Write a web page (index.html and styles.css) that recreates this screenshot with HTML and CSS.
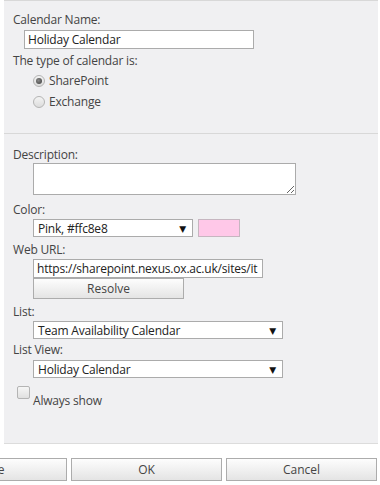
FILE: index.html
```html
<!DOCTYPE html>
<html lang="en">
<head>
    <meta charset="UTF-8">
    <title>Calendar Overlay Settings</title>
    <link rel="stylesheet" href="styles.css">
</head>
<body>

<div class="panel">
    <div class="section top">
        <div class="label">Calendar Name:</div>
        <input type="text" class="text-input name-input" value="Holiday Calendar">

        <div class="label type-label">The type of calendar is:</div>
        <div class="radio-row first-radio">
            <span class="radio checked"></span>
            <span class="radio-text">SharePoint</span>
        </div>
        <div class="radio-row">
            <span class="radio"></span>
            <span class="radio-text">Exchange</span>
        </div>
    </div>

    <div class="section bottom">
        <div class="label">Description:</div>
        <textarea class="desc"></textarea>

        <div class="label color-label">Color:</div>
        <div class="color-row">
            <div class="select color-select">
                <span>Pink, #ffc8e8</span>
                <span class="arrow">&#9660;</span>
            </div>
            <div class="swatch"></div>
        </div>

        <div class="label gap5">Web URL:</div>
        <input type="text" class="text-input url-input" value="https://sharepoint.nexus.ox.ac.uk/sites/it">
        <button class="button resolve">Resolve</button>

        <div class="label gap5">List:</div>
        <div class="select wide-select">
            <span>Team Availability Calendar</span>
            <span class="arrow">&#9660;</span>
        </div>

        <div class="label view-label">List View:</div>
        <div class="select wide-select view-select">
            <span>Holiday Calendar</span>
            <span class="arrow">&#9660;</span>
        </div>

        <div class="check-row">
            <span class="checkbox"></span>
            <span class="check-text">Always show</span>
        </div>
    </div>
</div>

<div class="footer">
    <button class="button action">Save</button>
    <button class="button action">OK</button>
    <button class="button action cancel">Cancel</button>
</div>

</body>
</html>
```

FILE: styles.css
```css
/* SharePoint style dialog */
body {
    margin: 0;
    background-color: #fff;
    font-family: "Open Sans", "DejaVu Sans", sans-serif;
    font-size: 12px;
    letter-spacing: -0.2px;
    color: #444;
}
.panel {
    margin-left: 4px;
    width: 374px;
    background-color: #f0f0f2;
    border-top: 1px solid #d8d8d8;
    border-bottom: 1px solid #dcdcdc;
}
.section {
    padding-left: 9px;
}
.top {
    padding-top: 11px;
    padding-bottom: 21px;
    border-bottom: 1px solid #d8d8d8;
}
.bottom {
    padding-top: 13px;
    padding-bottom: 34px;
}
.label {
    line-height: 16px;
    height: 16px;
}
.type-label {
    margin-top: 4px;
}
.color-label {
    margin-top: 7px;
}
.gap5 {
    margin-top: 5px;
}
.view-label {
    margin-top: 3px;
}
.text-input {
    display: block;
    box-sizing: border-box;
    height: 19px;
    margin: 2px 0 0 0;
    padding: 0 2px 0 3px;
    border: 1px solid #ababab;
    background-color: #fff;
    font-family: inherit;
    font-size: 12px;
    letter-spacing: -0.2px;
    color: #222;
    outline: none;
}
.name-input {
    width: 230px;
    margin-left: 11px;
}
.url-input {
    width: 230px;
    margin-left: 20px;
    margin-top: 1px;
}
.radio-row {
    display: flex;
    align-items: center;
    height: 21px;
    padding-left: 20px;
}
.first-radio {
    margin-top: 1px;
}
.radio {
    width: 10px;
    height: 10px;
    border-radius: 50%;
    border: 1px solid #b4b4b4;
    background: linear-gradient(#f4f4f4, #dcdcdc);
    position: relative;
    margin-right: 4px;
}
.radio.checked::after {
    content: "";
    position: absolute;
    left: 2px;
    top: 2px;
    width: 6px;
    height: 6px;
    border-radius: 50%;
    background: radial-gradient(circle at 40% 40%, #8a8a8a, #3c3c3c);
}
.desc {
    display: block;
    box-sizing: border-box;
    width: 263px;
    height: 32px;
    margin: 0 0 0 20px;
    border: 1px solid #ababab;
    background-color: #fff;
    resize: both;
    outline: none;
}
.color-row {
    display: flex;
    gap: 5px;
    margin-top: 1px;
    margin-left: 20px;
}
.select {
    box-sizing: border-box;
    display: flex;
    justify-content: space-between;
    align-items: center;
    height: 18px;
    padding: 0 6px 0 4px;
    border: 1px solid #ababab;
    background-color: #fff;
    color: #222;
}
.arrow {
    font-size: 9px;
    color: #111;
}
.color-select {
    width: 160px;
}
.swatch {
    box-sizing: border-box;
    width: 42px;
    height: 18px;
    background-color: #ffc8e8;
    border: 1px solid #c6b6c0;
}
.wide-select {
    width: 250px;
    margin: 1px 0 0 20px;
}
.view-select {
    margin-top: 2px;
}
.button {
    box-sizing: border-box;
    border: 1px solid #acacac;
    background: linear-gradient(#fdfdfd, #e4e4e4);
    font-family: inherit;
    font-size: 12px;
    color: #444;
    padding: 0;
    cursor: pointer;
}
.resolve {
    display: block;
    width: 151px;
    height: 21px;
    margin-left: 20px;
}
.check-row {
    display: flex;
    align-items: flex-start;
    margin-top: 8px;
    margin-left: 4px;
}
.checkbox {
    box-sizing: border-box;
    width: 13px;
    height: 13px;
    border: 1px solid #b4b4b4;
    border-radius: 2px;
    background: linear-gradient(#f6f6f6, #e0e0e0);
    margin-right: 3px;
}
.check-text {
    margin-top: 7px;
    line-height: 16px;
}
.footer {
    display: flex;
    justify-content: flex-end;
    gap: 4px;
    width: 377px;
    margin-top: 14px;
    overflow: hidden;
}
.action {
    flex: 0 0 151px;
    height: 23px;
}
.cancel {
    flex-basis: 151px;
}
```
